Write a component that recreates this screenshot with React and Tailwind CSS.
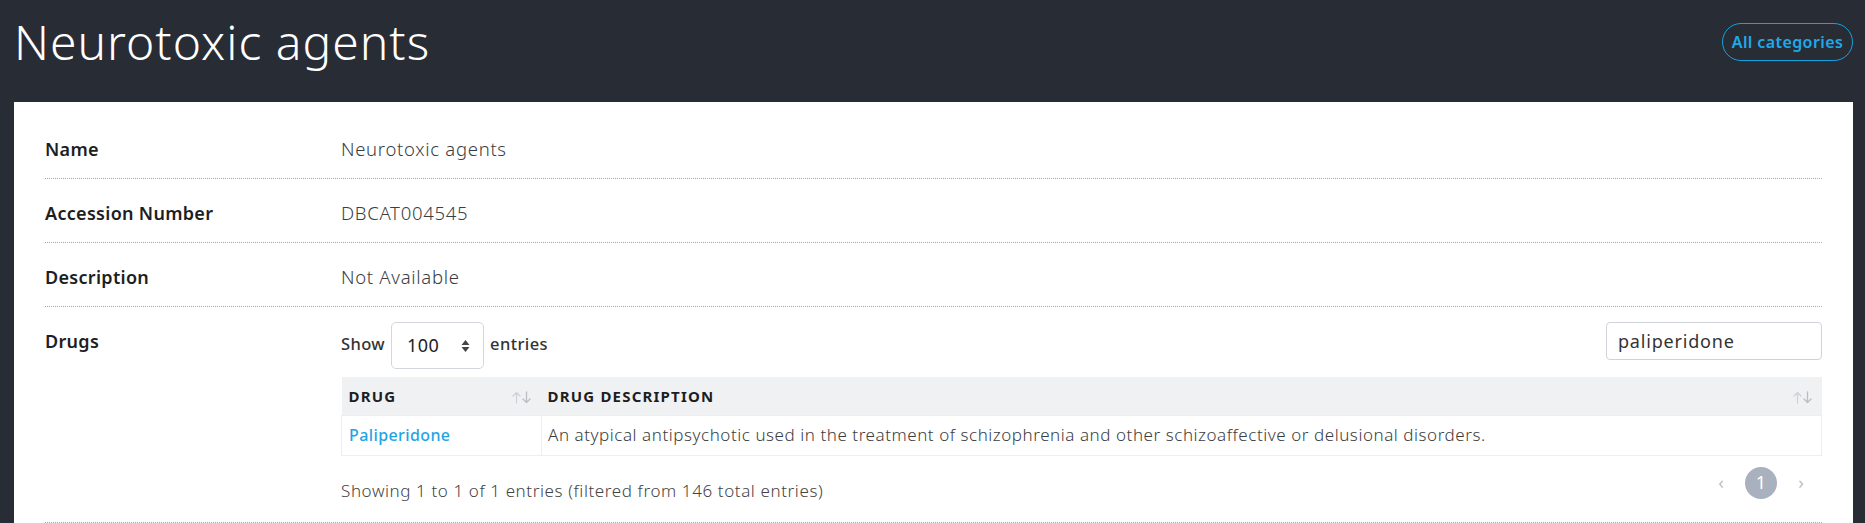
import React from "react";

const rows = [
  { label: "Name", value: "Neurotoxic agents" },
  { label: "Accession Number", value: "DBCAT004545" },
  { label: "Description", value: "Not Available" },
];

const SortIcon = () => (
  <svg width="19" height="13" viewBox="0 0 19 13" fill="none" strokeWidth="1.3" strokeLinecap="round" strokeLinejoin="round">
    <path d="M4.5 12 V1.5 M1 5 L4.5 1.5 L8 5" stroke="#cfd3d8" />
    <path d="M14.5 1 V11.5 M11 8 L14.5 11.5 L18 8" stroke="#b9bec6" />
  </svg>
);

const App = () => {
  return (
    <div className="min-h-[523px] bg-[#282c35] font-['Noto_Sans',sans-serif] text-[#333]">
      {/* Page header */}
      <div className="flex h-[102px] items-start justify-between pl-[14px] pr-[12px]">
        <h1 className="pt-[18px] text-[48px] font-light leading-none tracking-[1px] text-white">
          Neurotoxic agents
        </h1>
        <a
          href="#"
          className="mt-[23px] flex h-[38px] w-[131px] items-center justify-center rounded-full border border-[#16a2e0] text-[16px] font-semibold tracking-[0.4px] text-[#1fa9ea]"
        >
          All categories
        </a>
      </div>

      {/* Detail card */}
      <div className="ml-[14px] mr-[12px] bg-white px-[31px] pt-[13px]">
        {rows.map((row) => (
          <div
            key={row.label}
            className="flex border-b border-dotted border-[#a6abb3] pb-[17px] pt-[22px] leading-[24px]"
          >
            <div className="w-[296px] shrink-0 text-[18px] font-semibold tracking-[0.3px] text-[#1c1e22]">
              {row.label}
            </div>
            <div className="text-[18.5px] font-light tracking-[0.7px] text-[#3a3d42]">{row.value}</div>
          </div>
        ))}

        {/* Drugs */}
        <div className="flex border-b border-dotted border-[#a6abb3] pb-[19px]">
          <div className="w-[296px] shrink-0 pt-[22px] text-[18px] font-semibold leading-[24px] tracking-[0.3px] text-[#1c1e22]">
            Drugs
          </div>
          <div className="flex-1 pt-[15px]">
            <div className="flex items-start justify-between">
              <div className="flex items-center gap-[6px] text-[16.5px] font-medium tracking-[0.4px] text-[#333]">
                <span className="mt-[-2px]">Show</span>
                <div className="flex h-[47px] w-[93px] items-center justify-between rounded-[5px] border border-[#d3d6db] pl-[15px] pr-[13px]">
                  <span className="text-[18px] font-normal text-[#222]">100</span>
                  <svg width="9" height="14" viewBox="0 0 9 14">
                    <path d="M4.5 1 L8.5 6 H0.5 Z" fill="#444" />
                    <path d="M4.5 13 L8.5 8 H0.5 Z" fill="#444" />
                  </svg>
                </div>
                <span className="mt-[-2px]">entries</span>
              </div>
              <div className="flex h-[38px] w-[216px] items-center rounded-[4px] border border-[#cfd3d9] px-[11px] text-[18px] tracking-[0.8px] text-[#333]">
                paliperidone
              </div>
            </div>

            {/* Table */}
            <table className="mt-[8px] w-full border-collapse text-left">
              <thead>
                <tr className="bg-[#f0f1f3]">
                  <th className="h-[38px] w-[200px] px-[7px] text-[15px] font-bold tracking-[0.08em] text-[#1c1e22]">
                    <div className="flex items-center justify-between pr-[4px]">
                      <span>DRUG</span>
                      <span className="mt-[4px]"><SortIcon /></span>
                    </div>
                  </th>
                  <th className="h-[38px] px-[6px] text-[15px] font-bold tracking-[0.08em] text-[#1c1e22]">
                    <div className="flex items-center justify-between pr-[4px]">
                      <span>DRUG DESCRIPTION</span>
                      <span className="mt-[4px]"><SortIcon /></span>
                    </div>
                  </th>
                </tr>
              </thead>
              <tbody>
                <tr>
                  <td className="h-[40px] border border-[#eceef0] px-[7px] text-[16px] font-medium tracking-[0.4px] text-[#1ea5e6]">
                    Paliperidone
                  </td>
                  <td className="h-[40px] border border-[#eceef0] px-[6px] text-[17px] font-light tracking-[0.55px] text-[#3a3d42]">
                    An atypical antipsychotic used in the treatment of schizophrenia and other schizoaffective or delusional disorders.
                  </td>
                </tr>
              </tbody>
            </table>

            {/* Footer */}
            <div className="flex items-start justify-between">
              <span className="pt-[23px] text-[17px] font-light leading-[24px] tracking-[0.6px] text-[#444]">
                Showing 1 to 1 of 1 entries (filtered from 146 total entries)
              </span>
              <div className="mr-[5px] mt-[11px] flex items-center gap-[8px] text-[#b8bec8]">
                <span className="w-[32px] text-center text-[18px]">‹</span>
                <span className="flex h-[32px] w-[32px] items-center justify-center rounded-full bg-[#a9b1be] text-[18px] text-white">
                  1
                </span>
                <span className="w-[32px] text-center text-[18px]">›</span>
              </div>
            </div>
          </div>
        </div>
      </div>
    </div>
  );
};

export default App;
